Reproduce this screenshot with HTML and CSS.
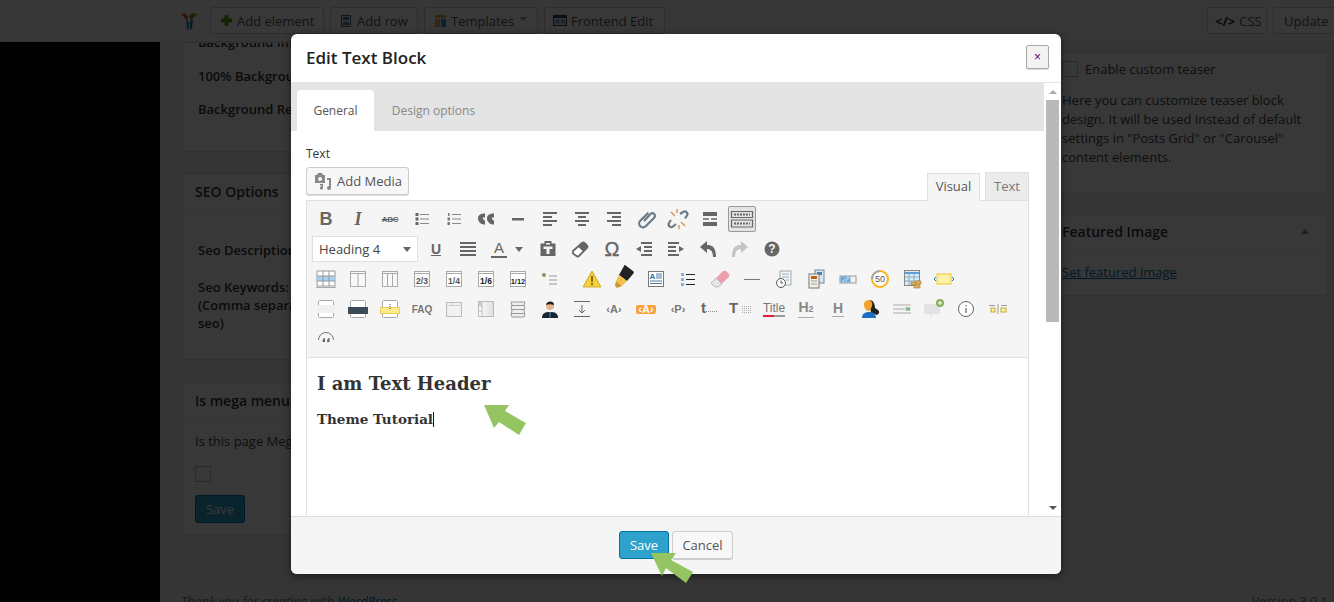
FILE: index.html
```html
<!DOCTYPE html>
<html lang="en">
<head>
<meta charset="utf-8">
<title>Edit Text Block</title>
<link rel="stylesheet" href="styles.css">
</head>
<body>
<div class="page">
  <header class="topbar">
    <svg class="logo" width="18" height="20" viewBox="0 0 18 20"><path d="M1 3l4-1 3 3v6z" fill="#c8742a"/><path d="M9 5l3-3 5 1-6 7z" fill="#6ea52f"/><path d="M6 10l3 1v8l-2-1z" fill="#2a8fb8"/><path d="M10 11l3-3-1 9-2 2z" fill="#1c6f94"/></svg>
    <div class="tb-btn tb-el"><svg width="11" height="11" viewBox="0 0 11 11"><path d="M3.500 0h4v3.500H11v4H7.500V11h-4V7.500H0v-4h3.500z" fill="#5fa500"/></svg>Add element</div>
    <div class="tb-btn tb-row"><svg width="10" height="12" viewBox="0 0 10 12"><rect x=".5" y=".5" width="9" height="11" fill="#dfe6ec" stroke="#667"/><rect x="2" y="2" width="6" height="3" fill="#4a7ea5"/><rect x="2" y="7" width="6" height="3" fill="#4a7ea5"/></svg>Add row</div>
    <div class="tb-btn tb-tpl"><svg width="11" height="12" viewBox="0 0 11 12"><rect width="11" height="3" fill="#e3a93c"/><rect y="4" width="5" height="8" fill="#e2b03f"/><rect x="6" y="4" width="5" height="8" fill="#3a9fd0"/></svg>Templates<i class="caret"></i></div>
    <div class="tb-btn tb-fe"><svg width="14" height="11" viewBox="0 0 14 11"><rect x=".5" y=".5" width="13" height="10" fill="#dfe8f2" stroke="#345"/><rect x="1" y="1" width="12" height="2" fill="#345"/><rect x="2.500" y="4.500" width="4" height="4" fill="#7fa3c8"/><rect x="8" y="4.500" width="4" height="4" fill="#7fa3c8"/></svg>Frontend Edit</div>
    <div class="tb-right">
      <div class="tb-btn tb-css"><b class="code">&lt;/&gt;</b>CSS</div>
      <div class="tb-btn tb-upd">Update</div>
    </div>
  </header>
  <div class="below">
    <aside class="adminmenu"></aside>
    <main class="content">
      <div class="cols">
        <div class="col-left">
          <section class="card card-bg">
            <p class="lbl">Background Image</p>
            <p class="lbl">100% Background Image</p>
            <p class="lbl">Background Repeat</p>
          </section>
          <section class="card card-seo">
            <h3 class="card-title">SEO Options</h3>
            <p class="lbl seo-a">Seo Description:</p>
            <p class="lbl seo-b">Seo Keywords:<br>(Comma separated)<br>seo)</p>
          </section>
          <section class="card card-mega">
            <h3 class="card-title mega-title">Is mega menu</h3>
            <div class="mega-body">
              <p class="mega-text">Is this page Mega menu?</p>
              <span class="chk"></span>
              <span class="bg-save">Save</span>
            </div>
          </section>
        </div>
        <div class="col-right">
          <section class="card card-teaser">
            <label class="teaser-row"><span class="chk"></span>Enable custom teaser</label>
            <p class="teaser-text">Here you can customize teaser block design. It will be used instead of default settings in "Posts Grid" or "Carousel" content elements.</p>
          </section>
          <section class="card card-feat">
            <h3 class="feat-title">Featured Image<i class="feat-arrow"></i></h3>
            <a class="feat-link" href="#">Set featured image</a>
          </section>
        </div>
      </div>
      <footer class="foot"><em>Thank you for creating with <u>WordPress</u>.</em><span>Version 3.9.1</span></footer>
    </main>
  </div>
  <div class="backdrop"></div>

  <div class="modal">
    <div class="m-head">
      <h2 class="m-title">Edit Text Block</h2>
      <button class="m-close">×</button>
    </div>
    <div class="m-scroll">
      <div class="m-body">
        <div class="tabs">
          <span class="tab tab-on">General</span>
          <span class="tab">Design options</span>
        </div>
        <div class="panel">
          <div class="fld-label">Text</div>
          <div class="media-row">
            <button class="add-media">
              <svg width="18" height="18" viewBox="0 0 18 18"><path d="M1 3h2l1-2h4l1 2h2v8H1z" fill="#888"/><circle cx="6" cy="7" r="2" fill="#f7f7f7"/><path d="M13 6h4v10a2 2 0 1 1-2-2V8h-2z" fill="#888"/><path d="M6 12h3v4a1.600 1.600 0 1 1-1.600-1.600V13.500H6z" fill="#888"/></svg>
              Add Media
            </button>
            <div class="mode-tabs">
              <span class="mode mode-on">Visual</span>
              <span class="mode">Text</span>
            </div>
          </div>
          <div class="editor">
            <div class="toolbar">
              <div class="tr">
                <span class="ic g-b">B</span>
                <span class="ic g-i">I</span>
                <span class="ic g-s">ABC</span>
                <span class="ic"><svg viewBox="0 0 24 24"><path d="M5.500 6h3v3h-3zM5.500 10.500h3v3h-3zM5.500 15h3v3h-3z" fill="#666"/><path d="M10 7.500h9M10 12h9M10 16.500h9" stroke="#888" stroke-width="1.200"/></svg></span>
                <span class="ic"><svg viewBox="0 0 24 24"><path d="M6 6h1.500v3H6zM5.500 10.500H8v3H5.500zM5.500 15H8v3H5.500z" fill="#777"/><path d="M10 7.500h9M10 12h9M10 16.500h9" stroke="#888" stroke-width="1.200"/></svg></span>
                <span class="ic"><svg viewBox="0 0 24 24"><path d="M11 6.500v4H8.800c0 1.500.7 2.400 2.200 3v4c-3.500 0-7-2.200-7-6.300 0-3 2.500-4.700 7-4.700zM20 6.500v4h-2.200c0 1.500.7 2.400 2.200 3v4c-3.500 0-7-2.200-7-6.300 0-3 2.500-4.700 7-4.700z" fill="#666"/></svg></span>
                <span class="ic"><svg viewBox="0 0 24 24"><rect x="6" y="11" width="12" height="2.500" fill="#666"/></svg></span>
                <span class="ic"><svg viewBox="0 0 24 24"><path d="M5 5h14v2H5zM5 9h9v2H5zM5 13h14v2H5zM5 17h9v2H5z" fill="#666"/></svg></span>
                <span class="ic"><svg viewBox="0 0 24 24"><path d="M5 5h14v2H5zM8 9h8v2H8zM5 13h14v2H5zM8 17h8v2H8z" fill="#666"/></svg></span>
                <span class="ic"><svg viewBox="0 0 24 24"><path d="M5 5h14v2H5zM10 9h9v2h-9zM5 13h14v2H5zM10 17h9v2h-9z" fill="#666"/></svg></span>
                <span class="ic"><svg viewBox="0 0 24 24"><path d="M10 14l6.500-7a2.600 2.600 0 0 1 3.700 3.700l-8.500 8.500a3.800 3.800 0 0 1-5.400-5.400l8-8" fill="none" stroke="#6b7b88" stroke-width="2.200"/></svg></span>
                <span class="ic"><svg viewBox="0 0 24 24"><path d="M14 7l3-2a2.700 2.700 0 0 1 4 3.500l-2 3M10 17l-3 2.500a2.700 2.700 0 0 1-4-3.500l2-3" fill="none" stroke="#6b7b88" stroke-width="2.200"/><path d="M5 5l4 4M19 19l-4-4M11 2v4M13 18v4" stroke="#d59a52" stroke-width="1.500"/></svg></span>
                <span class="ic"><svg viewBox="0 0 24 24"><path d="M5 5h14v4H5zM5 15h14v4H5zM5 11.300h6v1.500H5zM13 11.300h6v1.500h-6z" fill="#666"/></svg></span>
                <span class="ic ic-active"><svg viewBox="0 0 24 24"><path d="M1.500 4.500h21v6h-21zM1.500 13h21v7h-21z" fill="none" stroke="#666" stroke-width="1.200"/><path d="M4 7.500h16M4 16.500h16" stroke="#666" stroke-width="2" stroke-dasharray="2 1"/></svg></span>
              </div>
              <div class="tr">
                <span class="fmt"><span>Heading 4</span><i class="fmt-caret"></i></span>
                <span class="ic"><span class="g-u">U</span></span>
                <span class="ic"><svg viewBox="0 0 24 24"><path d="M4 5h16v2H4zM4 9h16v2H4zM4 13h16v2H4zM4 17h16v2H4z" fill="#666"/></svg></span>
                <span class="ic ic-color"><span class="g-a">A</span><i class="fmt-caret"></i></span>
                <span class="ic"><svg viewBox="0 0 24 24"><path d="M4.500 6.500h4V4h7v2.500h4V19h-15z" fill="#666"/><path d="M10 6h4v1.500h-4zM7.500 9.500h9V12h-3v5h-3v-5h-3z" fill="#f5f5f5"/></svg></span>
                <span class="ic"><svg viewBox="0 0 24 24"><path d="M5 14L14 6a2 2 0 0 1 2.500 0L19 8.500a2 2 0 0 1 0 2.500l-8 8a2 2 0 0 1-2.500 0L5 16.500z" fill="#fff" stroke="#666" stroke-width="1.800"/><path d="M10 9.500L14 6a2 2 0 0 1 2.500 0L19 8.500a2 2 0 0 1 0 2.500l-4 3.500z" fill="#666"/></svg></span>
                <span class="ic g-o">Ω</span>
                <span class="ic"><svg viewBox="0 0 24 24"><path d="M9 5h11v2H9zM12 9h8v2h-8zM12 13h8v2h-8zM9 17h11v2H9z" fill="#666"/><path d="M9 9v6l-5-3z" fill="#666"/></svg></span>
                <span class="ic"><svg viewBox="0 0 24 24"><path d="M4 5h11v2H4zM4 9h8v2H4zM4 13h8v2H4zM4 17h11v2H4z" fill="#666"/><path d="M15 9v6l5-3z" fill="#666"/></svg></span>
                <span class="ic"><svg viewBox="0 0 24 24"><path d="M11 4v4c5 0 9 2 9 12h-3c0-5-2-8-6-8v4L4 10z" fill="#666"/></svg></span>
                <span class="ic"><svg viewBox="0 0 24 24"><path d="M13 4v4c-5 0-9 2-9 12h3c0-5 2-8 6-8v4l7-6z" fill="#c4c4c4"/></svg></span>
                <span class="ic"><svg viewBox="0 0 24 24"><circle cx="12" cy="12" r="7.500" fill="#666"/><text x="12" y="16" class="st st-q">?</text></svg></span>
              </div>
              <div class="tr">
                <span class="ic"><svg viewBox="0 0 24 24"><path d="M3 4h18v15H3z" fill="#fff" stroke="#999"/><path d="M3 9h18v5H3z" fill="#a9cfef"/><path d="M9 4v15M15 4v15M3 9h18M3 14h18" stroke="#999"/><path d="M2 20.500h20" stroke="#aaa"/></svg></span>
                <span class="ic"><svg viewBox="0 0 24 24"><rect x="4.500" y="4.500" width="15" height="15" fill="#f8f8f8" stroke="#aaa"/><path d="M4.500 6.500h15M12 6.500v13" stroke="#aaa"/></svg></span>
                <span class="ic"><svg viewBox="0 0 24 24"><rect x="4.500" y="4.500" width="15" height="15" fill="#f8f8f8" stroke="#aaa"/><path d="M4.500 6.500h15M9.500 6.500v13M14.500 6.500v13" stroke="#aaa"/></svg></span>
                <span class="ic"><svg viewBox="0 0 24 24"><rect x="4.500" y="4.500" width="15" height="15" fill="#f8f8f8" stroke="#aaa"/><path d="M4.500 6.500h15" stroke="#aaa"/><text x="12" y="16.500" class="st st-f">2/3</text></svg></span>
                <span class="ic"><svg viewBox="0 0 24 24"><rect x="4.500" y="4.500" width="15" height="15" fill="#fff" stroke="#aaa"/><path d="M4.500 6.500h15" stroke="#aaa"/><text x="12" y="16.500" class="st st-f">1/4</text></svg></span>
                <span class="ic"><svg viewBox="0 0 24 24"><rect x="4.500" y="4.500" width="15" height="15" fill="#fff" stroke="#aaa"/><path d="M4.500 6.500h15" stroke="#aaa"/><text x="12" y="16.500" class="st st-f st-dk">1/6</text></svg></span>
                <span class="ic"><svg viewBox="0 0 24 24"><rect x="4.500" y="4.500" width="15" height="15" fill="#fff" stroke="#aaa"/><path d="M4.500 6.500h15" stroke="#aaa"/><text x="12" y="16.500" class="st st-f st-sm">1/12</text></svg></span>
                <span class="ic ic-gap"><svg viewBox="0 0 24 24"><circle cx="6" cy="8" r="2" fill="#7f9a55"/><path d="M11 9h8M11 13h8M11 17h8" stroke="#999"/></svg></span>
                <span class="ic"><svg viewBox="0 0 24 24"><path d="M12 4l9 16H3z" fill="#f3cf3a" stroke="#d2ab32"/><path d="M11 9h2v6h-2zM11 16h2v2h-2z" fill="#8c6d14"/></svg></span>
                <span class="ic"><svg class="over" viewBox="0 0 24 24"><path d="M13 -2l8 6c1 1 1 2 0 3l-6 7-8-6 5-9c0-1 .5-1 1-1z" fill="#222"/><path d="M7 8l8 6-5 5-6-5z" fill="#f0c04a"/><path d="M4 14l6 5-5 2-2-2z" fill="#c99a30"/></svg></span>
                <span class="ic"><svg viewBox="0 0 24 24"><rect x="4.500" y="4.500" width="15" height="15" fill="#fff" stroke="#777"/><text x="8.500" y="12" class="st st-ab">A</text><path d="M12 7h6M12 9h6M12 11h6M6 14h12M6 16.500h12" stroke="#557a9c"/></svg></span>
                <span class="ic"><svg viewBox="0 0 24 24"><path d="M5 6h3v3H5zM5 11h3v3H5zM5 16h3v3H5z" fill="#86aedb"/><path d="M10 7.500h9M10 12.500h9M10 17.500h9" stroke="#222" stroke-width="1.200"/></svg></span>
                <span class="ic"><svg viewBox="0 0 24 24"><path d="M3 16L14 5a3 3 0 0 1 5 0l1 1a3 3 0 0 1 0 5L10 20H7z" fill="#ef9eae"/><path d="M3 16l5-5 6 6-4 3H7z" fill="#e6e6e6" stroke="#aaa" stroke-width=".7"/></svg></span>
                <span class="ic"><svg viewBox="0 0 24 24"><path d="M4 12.500h16" stroke="#777"/></svg></span>
                <span class="ic"><svg viewBox="0 0 24 24"><path d="M8 4h11v14H8z" fill="#f3f7fa" stroke="#9aa"/><path d="M10 7h7M10 10h7M14 13h3" stroke="#9ab"/><circle cx="9" cy="16" r="4.500" fill="#fff" stroke="#555"/><path d="M9 13.500V16h2" fill="none" stroke="#555"/></svg></span>
                <span class="ic"><svg viewBox="0 0 24 24"><rect x="11" y="3" width="9" height="13" fill="#d8e6f2" stroke="#789"/><rect x="13" y="5" width="5" height="3" fill="#3d82b8"/><rect x="5" y="7" width="10" height="14" fill="#f4f0e6" stroke="#777"/><rect x="7" y="9" width="6" height="3" fill="#b8651c"/><path d="M7 14h6M7 17h6" stroke="#999"/></svg></span>
                <span class="ic"><svg viewBox="0 0 24 24"><rect x="4" y="9" width="16" height="7" fill="#f2f2f2" stroke="#999"/><rect x="4.500" y="9.500" width="10" height="6" fill="#6ea7d6"/><path d="M6 15l6-5M9 15l5-5" stroke="#cfe3f3"/></svg></span>
                <span class="ic"><svg viewBox="0 0 24 24"><circle cx="12" cy="12" r="8" fill="#fff" stroke="#fbb117" stroke-width="2"/><path d="M12 4a8 8 0 0 0-8 8" fill="none" stroke="#aaa" stroke-width="2"/><text x="12" y="15" class="st st-50">50</text></svg></span>
                <span class="ic"><svg viewBox="0 0 24 24"><rect x="4.500" y="3.500" width="15" height="15" fill="#d9ecfa" stroke="#888"/><path d="M5 6h14" stroke="#5ba0d6" stroke-width="2"/><path d="M5 10h14M5 14h14M9 7v11M14 7v11" stroke="#8ab"/><rect x="11" y="15" width="5" height="3" fill="#dcae5e" stroke="#a67e30" stroke-width=".6"/><rect x="16" y="14" width="5" height="3" fill="#dcae5e" stroke="#a67e30" stroke-width=".6"/><rect x="14" y="18" width="6" height="3" fill="#dcae5e" stroke="#a67e30" stroke-width=".6"/></svg></span>
                <span class="ic"><svg viewBox="0 0 24 24"><rect x="5" y="7" width="14" height="10" fill="#fdf2a8" stroke="#e8c82a"/><path d="M4 10l-2 2 2 2M20 10l2 2-2 2" fill="none" stroke="#1b78c8"/></svg></span>
              </div>
              <div class="tr">
                <span class="ic"><svg viewBox="0 0 24 24"><rect x="4.500" y="3.500" width="15" height="17" rx="1" fill="#fff" stroke="#aaa"/><rect x="3" y="8" width="18" height="8" fill="#f0f0f0"/></svg></span>
                <span class="ic"><svg viewBox="0 0 24 24"><rect x="4.500" y="3.500" width="15" height="17" rx="1" fill="#fff" stroke="#aaa"/><rect x="2" y="10" width="20" height="7" fill="#3c4a57"/></svg></span>
                <span class="ic"><svg viewBox="0 0 24 24"><rect x="4.500" y="3.500" width="15" height="17" rx="1" fill="#fff" stroke="#aaa"/><rect x="2.500" y="10.500" width="19" height="6" fill="#fdea8c" stroke="#e8cf58"/><path d="M12 7v5" stroke="#555" stroke-dasharray="1 1"/></svg></span>
                <span class="ic"><span class="g-faq">FAQ</span></span>
                <span class="ic"><svg viewBox="0 0 24 24"><rect x="4.500" y="5.500" width="15" height="14" fill="#f1f1f1" stroke="#bbb"/><path d="M4.500 8.500h5v-3M9.500 8.500h10" fill="none" stroke="#ccc"/></svg></span>
                <span class="ic"><svg viewBox="0 0 24 24"><defs><linearGradient id="gr"><stop offset="0" stop-color="#fff"/><stop offset="1" stop-color="#dedede"/></linearGradient></defs><rect x="4.500" y="4.500" width="15" height="15" fill="url(#gr)" stroke="#bbb"/><path d="M8 4.500v15M4.500 9h3.500M4.500 14h3.500" stroke="#bbb"/><rect x="5" y="5" width="3" height="4" fill="#bcd4ea"/></svg></span>
                <span class="ic"><svg viewBox="0 0 24 24"><path d="M5 5h14l-1 3 1 3-1 3 1 3-1 3H6l-1-3 1-3-1-3 1-3z" fill="#eee" stroke="#999"/><path d="M5 8.500h13M5 12.500h13M5 16.500h13" stroke="#999"/></svg></span>
                <span class="ic"><svg viewBox="0 0 24 24"><path d="M4 21c0-5 3-6 8-6s8 1 8 6z" fill="#1b2630"/><path d="M11 15h2l-.5 6h-1z" fill="#2a72a8"/><circle cx="12" cy="9" r="4" fill="#eab48a"/><path d="M8 8c0-4 8-5 8 0-3-1-6-1-8 0z" fill="#222"/></svg></span>
                <span class="ic"><svg viewBox="0 0 24 24"><path d="M4 4.500h16M4 19.500h16M12 8v8" stroke="#666" fill="none"/><path d="M9 13l3 3 3-3" fill="none" stroke="#666"/></svg></span>
                <span class="ic"><span class="g-tag">‹A›</span></span>
                <span class="ic"><span class="g-tag g-tag-on">‹A›</span></span>
                <span class="ic"><span class="g-tag">‹P›</span></span>
                <span class="ic ic-tl"><span class="g-t">t</span><svg viewBox="0 0 24 24"><path d="M8 14.500h12" stroke="#888" stroke-dasharray="1 1"/></svg></span>
                <span class="ic ic-tl"><span class="g-t g-tt">T</span><svg viewBox="0 0 24 24"><path d="M12 9.500h9M12 11.500h9M12 13.500h9M12 15.500h9" stroke="#aaa" stroke-dasharray="1 1"/></svg></span>
                <span class="ic ic-title"><span class="g-title">Title</span></span>
                <span class="ic"><span class="g-h2">H<small>2</small></span></span>
                <span class="ic"><span class="g-h2 g-h">H</span></span>
                <span class="ic"><svg viewBox="0 0 24 24"><path d="M11 3c5 0 6 5 6 8l3 2c2 2 1 4-1 5l-6-2z" fill="#222"/><path d="M4 21c0-4 3-6 7-6s7 2 7 6z" fill="#1d6fc4"/><path d="M6 7c0-3 3-4 5-4s4 3 3 6-2 5-4 5-4-3-4-7z" fill="#f0a42c"/></svg></span>
                <span class="ic"><svg viewBox="0 0 24 24"><path d="M3 8h18M3 12h12M3 16h18" stroke="#aaa"/><rect x="16" y="10.500" width="4" height="3" fill="#6fbf73" stroke="#aaa" stroke-width=".5"/></svg></span>
                <span class="ic"><svg viewBox="0 0 24 24"><path d="M2 7h16v10H11l-3 3v-3H2z" fill="#e3e3e3"/><circle cx="18" cy="6" r="4" fill="#8fb05e"/><path d="M16 6h4M18 4v4" stroke="#fff"/></svg></span>
                <span class="ic"><svg viewBox="0 0 24 24"><circle cx="12" cy="12" r="7.500" fill="#fff" stroke="#666"/><path d="M12 11v5M12 8v1.500" stroke="#666" stroke-width="1.200"/></svg></span>
                <span class="ic"><svg viewBox="0 0 24 24"><path d="M3 8.500h6M15 8.500h6M12 7v10" stroke="#999"/><rect x="5" y="11" width="4" height="4" fill="#fdf2a8" stroke="#c7a82e"/><rect x="15" y="11" width="5" height="4" fill="#fdf2a8" stroke="#c7a82e"/></svg></span>
              </div>
              <div class="tr">
                <span class="ic"><svg viewBox="0 0 24 24"><path d="M4.500 13a7.500 7.500 0 0 1 15 0" fill="none" stroke="#777"/><path d="M11 11v4H8.500c0-2.500.8-4 2.500-4zM15.500 11v4H13c0-2.500.8-4 2.500-4z" fill="#666"/></svg></span>
              </div>
            </div>
            <div class="edit-area">
              <h4 class="ed-h">I am Text Header</h4>
              <p class="ed-p"><strong>Theme Tutorial</strong><i class="cursor"></i></p>
            </div>
          </div>
        </div>
      </div>
      <div class="sbar">
        <i class="sb-up"></i>
        <div class="sb-track"><div class="sb-thumb"></div></div>
        <i class="sb-down"></i>
      </div>
    </div>
    <div class="m-foot">
      <button class="btn-save">Save</button>
      <button class="btn-cancel">Cancel</button>
    </div>
  </div>

  <svg class="arrow arrow-a" width="44" height="32" viewBox="0 0 44 32"><path d="M0 0h25l-4 6 21 12-7 12-20-13-5 6z" fill="#95c562"/></svg>
  <svg class="arrow arrow-b" width="44" height="32" viewBox="0 0 44 32"><path d="M0 0h25l-5 7 22 12-7 11-20-15-4 8z" fill="#95c562"/></svg>
</div>
</body>
</html>
```

FILE: styles.css
```css
* { box-sizing: border-box; }
html, body { margin: 0; padding: 0; height: 100%; overflow: hidden; }
body { font-family: "Open Sans", "Liberation Sans", sans-serif; font-size: 13px; color: #333; background: #f1f1f1; }
p, h2, h3, h4 { margin: 0; }
.page { position: relative; width: 1334px; height: 602px; overflow: hidden; background: #f1f1f1; display: flex; flex-direction: column; }

/* background page */
.topbar { height: 42px; flex: none; background: #fbfbfb; border-bottom: 1px solid #ddd; display: flex; align-items: flex-start; padding: 7px 0 0 180px; }
.logo { margin: 4px 12px 0 0; flex: none; }
.tb-btn { height: 27px; border: 1px solid #ccc; border-radius: 3px; background: #fff; color: #555; display: flex; align-items: center; gap: 5px; padding: 0 0 0 10px; margin-right: 6px; white-space: nowrap; flex: none; }
.tb-btn svg { flex: none; }
.tb-el { width: 114px; }
.tb-row { width: 88px; gap: 6px; }
.tb-tpl { width: 114px; }
.tb-fe { width: 121px; gap: 4px; padding-left: 8px; margin-right: 0; }
.caret { width: 0; height: 0; border: 4px solid transparent; border-top-color: #aaa; border-bottom: 0; margin: -4px 0 0 0; }
.tb-right { margin-left: auto; display: flex; width: 127px; flex: none; }
.tb-css { width: 60px; gap: 4px; padding: 0 0 0 7px; }
.code { color: #222; font-size: 13px; }
.tb-upd { width: 61px; margin-right: 0; padding-left: 10px; border-right: 0; border-radius: 3px 0 0 3px; }

.below { flex: 1; display: flex; min-height: 0; }
.adminmenu { width: 160px; flex: none; background: #000; }
.content { flex: 1; min-width: 0; padding: 0 6px 0 23px; display: flex; flex-direction: column; overflow: hidden; }
.cols { display: flex; gap: 22px; height: 555px; flex: none; }
.col-left { width: 835px; flex: none; }
.col-right { width: 288px; flex: none; padding-top: 10px; }
.card { background: #fff; border: 1px solid #e5e5e5; }
.card-bg { height: 110px; padding: 0 0 0 14px; margin-bottom: 21px; overflow: hidden; }
.lbl { font-weight: 600; font-size: 13px; line-height: 18px; color: #333; }
.card-bg .lbl { height: 33px; }
.card-bg .lbl:first-child { height: 9px; margin-top: -10px; margin-bottom: 25px; }
.card-seo { height: 187px; margin-bottom: 22px; }
.card-title { font-size: 14px; font-weight: 600; color: #333; padding: 9px 11px; height: 36px; line-height: 18px; border-bottom: 1px solid #eee; }
.seo-a { padding: 31px 0 0 14px; }
.seo-b { padding: 19px 0 0 14px; }
.card-mega { height: 153px; }
.mega-title { height: 38px; padding-top: 9px; }
.mega-body { padding: 11px 11px 0; display: flex; flex-direction: column; align-items: flex-start; }
.mega-text { line-height: 18px; color: #444; }
.chk { display: block; width: 16px; height: 16px; border: 1px solid #bbb; background: #fff; flex: none; }
.mega-body .chk { margin-top: 16px; }
.bg-save { margin-top: 13px; width: 50px; height: 28px; border-radius: 3px; border: 1px solid #0074a2; background: #2ea2cc; color: #fff; display: flex; align-items: center; justify-content: center; }
.card-teaser { height: 141px; margin-bottom: 21px; padding: 8px 0 0 21px; }
.teaser-row { display: flex; align-items: center; gap: 7px; height: 16px; color: #444; }
.teaser-text { margin-top: 14px; width: 260px; line-height: 19px; color: #444; }
.card-feat { height: 82px; }
.feat-title { display: flex; justify-content: space-between; align-items: center; height: 36px; padding: 0 18px 2px 21px; font-size: 14px; font-weight: 600; border-bottom: 1px solid #eee; margin-bottom: 12px; }
.feat-arrow { width: 0; height: 0; border: 4px solid transparent; border-bottom: 5px solid #888; border-top: 0; }
.feat-link { display: block; padding-left: 21px; line-height: 18px; color: #0074a2; }
.foot { display: flex; justify-content: space-between; font-size: 12.700px; margin-left: -2px; color: #777; line-height: 16px; margin-top: -4px; }
.foot u { color: #0074a2; }
.backdrop { position: absolute; inset: 0; background: rgba(0, 0, 0, .78); }

/* modal */
.modal { position: absolute; left: 291px; top: 34px; width: 770px; height: 540px; background: #fff; border-radius: 6px; box-shadow: 0 2px 8px rgba(0,0,0,.5); display: flex; flex-direction: column; overflow: hidden; }
.m-head { height: 49px; flex: none; display: flex; justify-content: space-between; align-items: flex-start; padding: 11px 12px 0 15px; border-bottom: 1px solid #e5e5e5; }
.m-title { font-size: 17px; font-weight: 600; line-height: 26px; color: #222; }
.m-close { width: 23px; height: 24px; padding: 0; border: 1px solid #aaa; border-radius: 2px; background: #f2f2f2; color: #5a0a6a; font-size: 12px; line-height: 20px; font-family: "Liberation Sans", sans-serif; box-shadow: 0 1px 1px rgba(0,0,0,.15); }
.m-scroll { flex: 1; min-height: 0; display: flex; overflow: hidden; }
.m-body { flex: 1; min-width: 0; }
.tabs { height: 48px; background: #e4e4e4; display: flex; align-items: flex-end; padding-left: 6px; }
.tab { height: 41px; width: 77px; display: flex; align-items: center; justify-content: center; font-size: 12px; color: #888; border-radius: 4px 4px 0 0; }
.tab + .tab { width: 119px; }
.tab-on { background: #fff; color: #555; }
.panel { padding: 14px 15px 0; }
.fld-label { font-size: 12px; line-height: 17px; color: #333; height: 20px; }
.media-row { display: flex; justify-content: space-between; align-items: flex-end; height: 35px; }
.add-media { width: 103px; height: 28px; margin-bottom: 5px; border: 1px solid #ccc; border-radius: 3px; background: #f7f7f7; display: flex; align-items: center; gap: 5px; padding: 0 0 0 7px; font: 13px "Open Sans", sans-serif; color: #555; box-shadow: 0 1px 0 #ddd; }
.mode-tabs { display: flex; gap: 5px; width: 102px; flex: none; }
.mode { height: 28px; width: 44px; padding-bottom: 2px; display: flex; align-items: center; justify-content: center; border: 1px solid #e0e0e0; background: #ebebeb; color: #777; font-size: 13px; border-bottom: 0; }
.mode-on { width: 53px; padding-bottom: 4px; background: #f5f5f5; color: #555; position: relative; top: 1px; }
.editor { width: 723px; height: 320px; border: 1px solid #e0e0e0; background: #fff; }
.toolbar { height: 157px; background: #f5f5f5; border-bottom: 1px solid #e0e0e0; padding: 3px 0 0 3px; }
.tr { display: flex; height: 30px; align-items: center; }
.ic { width: 32px; height: 30px; flex: none; display: flex; align-items: center; justify-content: center; color: #666; position: relative; }
.ic svg { width: 24px; height: 24px; display: block; }
.ic svg.over { overflow: visible; }
.g-b { font: bold 18px "Liberation Sans", sans-serif; }
.g-i { font: italic bold 18px "Liberation Serif", serif; }
.g-s { font: bold 8px "Liberation Sans", sans-serif; text-decoration: line-through; letter-spacing: -.2px; }
.g-o { font: 20px "Liberation Sans", sans-serif; -webkit-text-stroke: .4px #666; }
.g-u { font: bold 14px "Liberation Sans", sans-serif; text-decoration: underline; }
.g-a { font: 15px "Liberation Sans", sans-serif; border-bottom: 2px solid #666; padding: 0 3px; line-height: 16px; }
.ic-active { height: 26px; width: 28px; margin-left: 2px; margin-right: 2px; border: 1px solid #999; border-radius: 2px; background: #e4e4e4; }
.ic-color { width: 48px; margin-left: 1px; margin-right: -1px; gap: 8px; justify-content: flex-start; padding-left: 6px; }
.fmt { width: 106px; height: 26px; margin: 0 2px 0 2px; flex: none; background: #fff; border: 1px solid #e0e0e0; display: flex; align-items: center; justify-content: space-between; padding: 0 6px; font-size: 13px; color: #444; }
.fmt-caret { width: 0; height: 0; border: 4px solid transparent; border-top: 5px solid #666; border-bottom: 0; }
.ic-gap { width: 42px; padding-right: 10px; }
.g-faq { font: bold 10px "Liberation Sans", sans-serif; color: #777; }
.g-tag { font: bold 11px "Liberation Sans", sans-serif; color: #777; }
.g-tag-on { background: #f9a13a; color: #fff; border-radius: 2px; padding: 0 2px; line-height: 9px; }
.ic-tl .g-t { position: absolute; left: 7px; top: 5px; font: bold 15px "Liberation Sans", sans-serif; color: #666; }
.ic-tl .g-tt { left: 3px; }
.g-title { font: 12px "Liberation Sans", sans-serif; color: #777; border-bottom: 2px solid #999; line-height: 14px; border-image: linear-gradient(90deg, #e5173f 50%, #999 50%) 1; }
.g-h2 { font: bold 14px "Liberation Sans", sans-serif; color: #888; border-bottom: 1px solid #aaa; line-height: 14px; padding-bottom: 1px; }
.g-h2 small { font-size: 9px; }
.g-h { padding: 0 1px 1px; }
.st { font-family: "Liberation Sans", sans-serif; text-anchor: middle; }
.st-q { font-size: 12px; font-weight: bold; fill: #f5f5f5; }
.st-f { font-size: 8.500px; font-weight: bold; fill: #555; }
.st-dk { fill: #222; }
.st-sm { font-size: 7.500px; fill: #222; }
.st-ab { font-size: 8px; font-weight: bold; fill: #2b6da8; }
.st-50 { font-size: 9px; fill: #555; }
.edit-area { padding: 13px 10px; color: #333; font-family: "DejaVu Serif", serif; }
.ed-h { font-size: 18px; font-weight: bold; line-height: 26px; }
.ed-p { font-size: 13.500px; line-height: 22px; margin-top: 11px; }
.cursor { display: inline-block; width: 1px; height: 15px; background: #111; vertical-align: -3px; }
.sbar { width: 17px; flex: none; background: #fff; display: flex; flex-direction: column; align-items: center; }
.sb-up, .sb-down { width: 0; height: 0; border: 4px solid transparent; flex: none; }
.sb-up { border-bottom: 4px solid #aaa; border-top: 0; margin: 7px 0 6px; }
.sb-track { flex: 1; width: 100%; padding: 0 2px; }
.sb-thumb { height: 222px; background: #b9b9b9; }
.sb-down { border-top: 4px solid #555; border-bottom: 0; margin-bottom: 6px; }
.m-foot { height: 58px; flex: none; background: #f5f5f5; border-top: 1px solid #ddd; display: flex; gap: 3px; padding: 14px 0 0 328px; }
.btn-save, .btn-cancel { height: 28px; padding: 0; border-radius: 3px; font: 13px "Open Sans", sans-serif; }
.btn-save { width: 50px; background: #2ea2cc; border: 1px solid #0074a2; color: #fff; }
.btn-cancel { width: 61px; background: #f7f7f7; border: 1px solid #ccc; color: #555; box-shadow: 0 1px 0 #ccc; }
.arrow { position: absolute; }
.arrow-a { left: 484px; top: 405px; }
.arrow-b { left: 651px; top: 553px; }
```
